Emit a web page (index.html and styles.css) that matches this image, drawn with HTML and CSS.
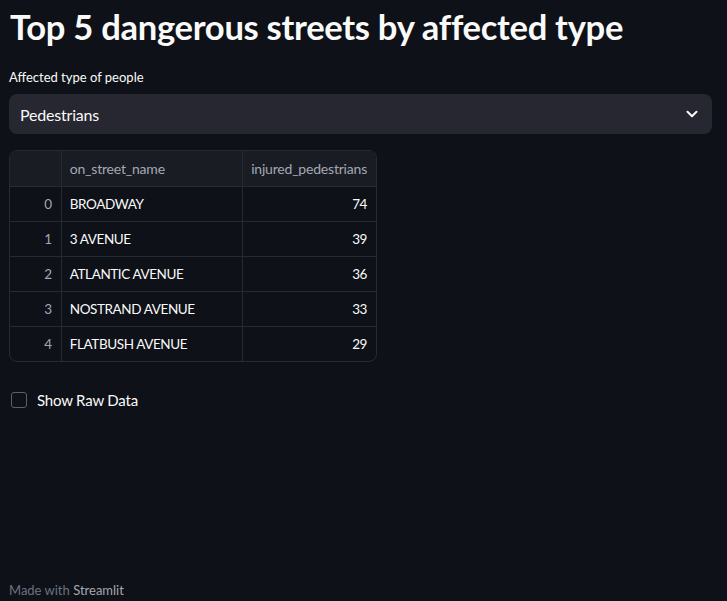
FILE: index.html
```html
<!DOCTYPE html>
<html lang="en">
<head>
<meta charset="utf-8">
<title>Top 5 dangerous streets</title>
<link rel="stylesheet" href="styles.css">
</head>
<body>
<main class="app">
  <h1 class="title">Top 5 dangerous streets by affected type</h1>
  <label class="field-label">Affected type of people</label>
  <div class="select">
    <span class="select-value">Pedestrians</span>
    <svg class="chevron" width="16" height="16" viewBox="0 0 16 16"><path d="M3.5 5.8 L8 10.2 L12.5 5.8" fill="none" stroke="#fafafa" stroke-width="2" stroke-linecap="round" stroke-linejoin="round"/></svg>
  </div>
  <div class="table-wrap">
    <table class="table">
      <thead>
        <tr><th class="idx"></th><th class="name">on_street_name</th><th class="num">injured_pedestrians</th></tr>
      </thead>
      <tbody>
        <tr><td class="idx">0</td><td class="name">BROADWAY</td><td class="num">74</td></tr>
        <tr><td class="idx">1</td><td class="name">3 AVENUE</td><td class="num">39</td></tr>
        <tr><td class="idx">2</td><td class="name">ATLANTIC AVENUE</td><td class="num">36</td></tr>
        <tr><td class="idx">3</td><td class="name">NOSTRAND AVENUE</td><td class="num">33</td></tr>
        <tr><td class="idx">4</td><td class="name">FLATBUSH AVENUE</td><td class="num">29</td></tr>
      </tbody>
    </table>
  </div>
  <label class="checkbox">
    <span class="box"></span>
    <span class="checkbox-label">Show Raw Data</span>
  </label>
</main>
<footer class="footer">Made with <span class="brand">Streamlit</span></footer>
</body>
</html>
```
FILE: styles.css
```css
html, body {
  margin: 0;
  padding: 0;
  background: #0e1117;
  color: #fafafa;
  font-family: "Lato", "Noto Sans", sans-serif;
  height: 100%;
}
body {
  display: flex;
  flex-direction: column;
  min-height: 601px;
}
.app {
  flex: 1;
  padding: 0 15px 0 9px;
  display: flex;
  flex-direction: column;
}
.title {
  margin: 6px 0 0 1px;
  font-size: 34.6px;
  font-weight: 700;
  line-height: 42px;
  letter-spacing: -0.3px;
}
.field-label {
  margin-top: 20px;
  font-size: 13px;
  line-height: 18px;
  height: 18px;
}
.select {
  margin-top: 8px;
  height: 40px;
  background: #262730;
  border-radius: 8px;
  display: flex;
  align-items: center;
  justify-content: space-between;
  padding: 0 12px 0 11px;
}
.select-value {
  font-size: 16px;
  letter-spacing: -0.2px;
}
.chevron {
  display: block;
}
.table-wrap {
  margin-top: 16px;
  width: 366px;
  border: 1px solid #262a31;
  border-radius: 8px;
  overflow: hidden;
}
.table {
  border-collapse: collapse;
  width: 100%;
  font-size: 14px;
}
.table th, .table td {
  border-right: 1px solid #262a31;
  border-bottom: 1px solid #262a31;
  padding: 0 9px 0 8px;
}
.table th:last-child, .table td:last-child { border-right: none; }
.table tbody tr:last-child td { border-bottom: none; }
.table thead th {
  background: #1a1c24;
  height: 35px;
  font-weight: 400;
  color: #a3a8b4;
  text-align: left;
  letter-spacing: -0.2px;
}
.table td {
  height: 34px;
  color: #fafafa;
  font-size: 13.5px;
  letter-spacing: -0.4px;
}
.table .idx {
  width: 34px;
  text-align: right;
  color: #a3a8b4;
}
.table .name { width: 164px; }
.table .num { text-align: right; }
.table thead th.num { text-align: right; }
.checkbox {
  margin-top: 29px;
  display: flex;
  align-items: center;
  gap: 10px;
  padding-left: 2px;
}
.box {
  width: 14px;
  height: 14px;
  border: 1px solid #5c5f6a;
  border-radius: 3px;
  background: #0e1117;
}
.checkbox-label {
  font-size: 15px;
  letter-spacing: -0.2px;
}
.footer {
  padding: 0 0 2px 9px;
  font-size: 13px;
  line-height: 18px;
  color: #6d7180;
}
.brand {
  color: #a3a8b4;
}
```
